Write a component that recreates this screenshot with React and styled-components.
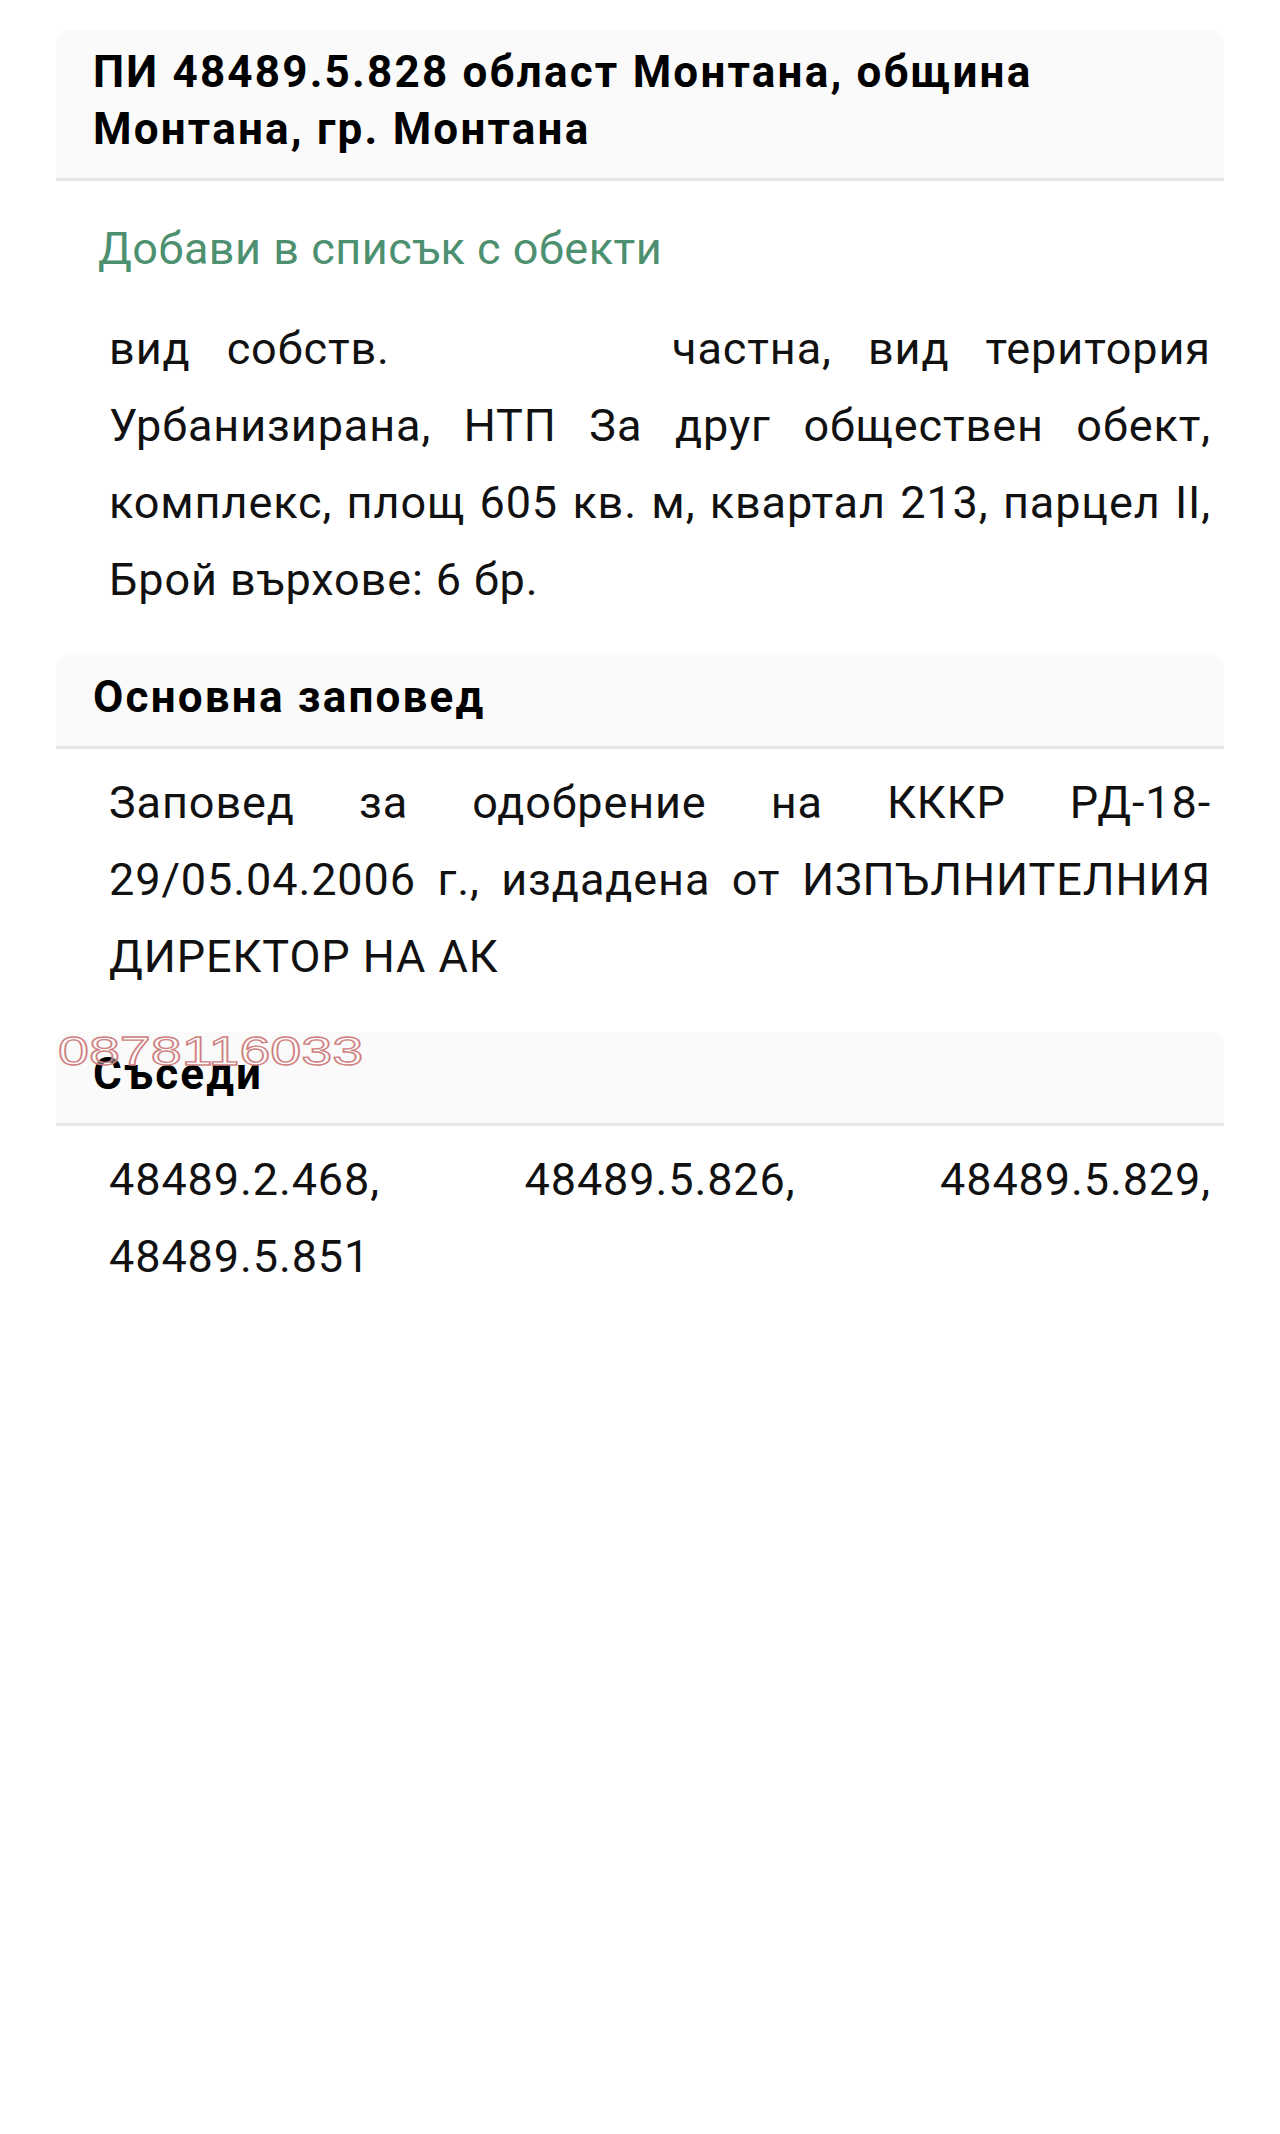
import React from 'react'
import styled, { createGlobalStyle } from 'styled-components'

const GlobalStyle = createGlobalStyle`
  html, body {
    margin: 0;
    padding: 0;
    background: #ffffff;
  }
  body {
    font-family: Roboto, "Noto Sans", sans-serif;
    color: #111111;
    -webkit-font-smoothing: antialiased;
  }
`

const Page = styled.div`
  width: 1168px;
  margin: 0 0 0 56px;
  padding: 30px 0 200px;
  min-height: 1900px;
`

const TitleBox = styled.header`
  background: #fafafa;
  border-radius: 12px 12px 0 0;
  border-bottom: 3px solid #e3e6e9;
  padding: ${p => p.$big ? '14px 60px 20px 37px' : '16px 40px 23px 37px'};
`

const Title = styled.h1`
  margin: 0;
  font-size: 44px;
  line-height: 57px;
  font-weight: 700;
  letter-spacing: 2.2px;
  color: #000;
`

const SectionTitle = styled.h2`
  margin: 0;
  font-size: 44px;
  line-height: 52px;
  font-weight: 700;
  letter-spacing: 2.2px;
  color: #000;
`

const AddLink = styled.a`
  display: block;
  margin: 29px 0 0 42px;
  font-size: 45px;
  line-height: 77px;
  letter-spacing: 0.5px;
  color: #4d9070;
  text-decoration: none;
  cursor: pointer;
`

const Body = styled.p`
  margin: ${p => p.$first ? '23px' : '15px'} 13px 0 53px;
  font-size: 45px;
  line-height: 77px;
  letter-spacing: 0.9px;
  text-align: justify;
  color: #111;
`

// blank stretch in the ownership line, as in the source page
const Gap = styled.span`
  display: inline-block;
  width: 210px;
`

const Section = styled.section`
  position: relative;
  margin-top: 37px;
`

const Watermark = styled.span`
  position: absolute;
  left: 2px;
  top: -1px;
  font-family: "Liberation Sans", Arial, sans-serif;
  font-size: 40px;
  line-height: 40px;
  color: rgba(255, 255, 255, 0.4);
  -webkit-text-stroke: 1.3px #cf7f7f;
  transform: scaleX(1.39);
  transform-origin: left top;
  white-space: nowrap;
  pointer-events: none;
  z-index: 2;
`

export default function App () {
  return (
    <>
      <GlobalStyle />
      <Page>
        <TitleBox $big>
          <Title>ПИ 48489.5.828 област Монтана, община Монтана, гр. Монтана</Title>
        </TitleBox>
        <AddLink>Добави в списък с обекти</AddLink>
        <Body $first>
          вид собств. <Gap /> частна, вид територия Урбанизирана, НТП За друг обществен обект, комплекс, площ 605 кв. м, квартал 213, парцел II, Брой върхове: 6 бр.
        </Body>

        <Section>
          <TitleBox>
            <SectionTitle>Основна заповед</SectionTitle>
          </TitleBox>
          <Body>
            Заповед за одобрение на КККР РД-18-29/05.04.2006 г., издадена от ИЗПЪЛНИТЕЛНИЯ ДИРЕКТОР НА АК
          </Body>
        </Section>

        <Section>
          <Watermark>0878116033</Watermark>
          <TitleBox>
            <SectionTitle>Съседи</SectionTitle>
          </TitleBox>
          <Body>
            48489.2.468, 48489.5.826, 48489.5.829, 48489.5.851
          </Body>
        </Section>
      </Page>
    </>
  )
}
